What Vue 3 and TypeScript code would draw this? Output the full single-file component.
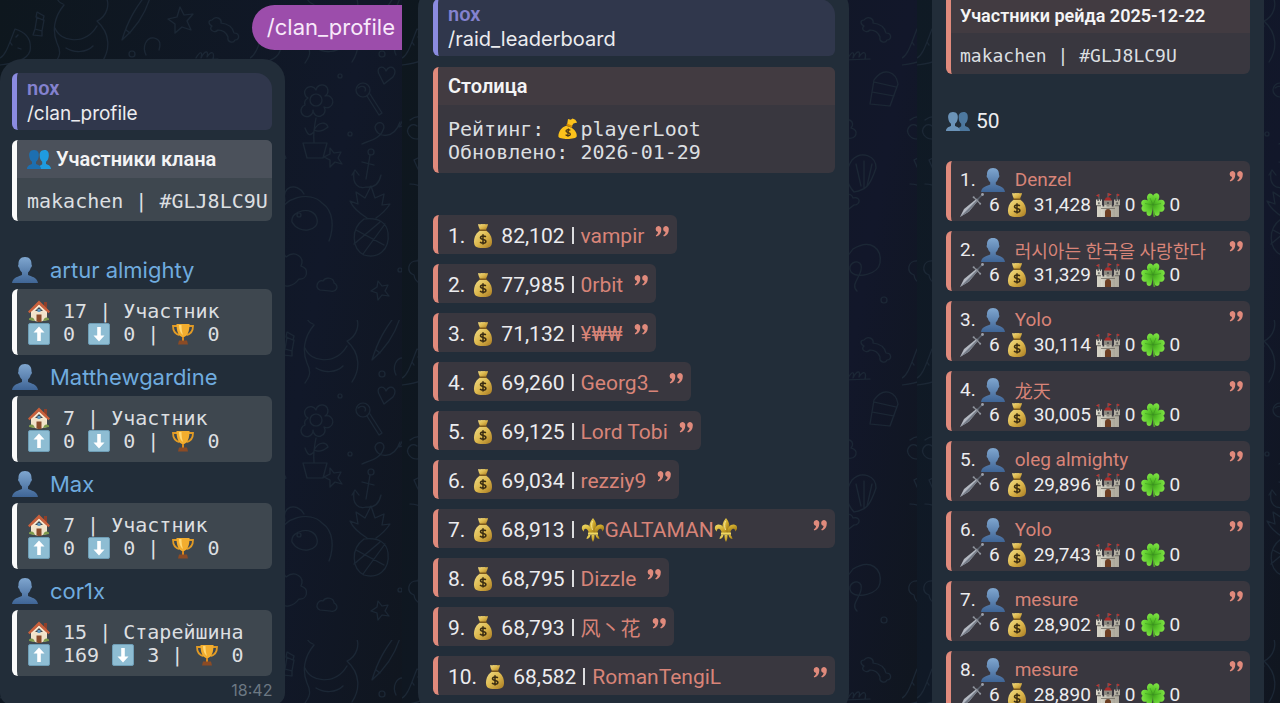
<script setup lang="ts">
interface ClanMember {
  name: string
  house: string
  role: string
  up: string
  down: string
  cups: string
}
interface LootRow {
  loot: string
  name: string
  lily?: boolean
  wide?: boolean
  cjk?: boolean
}
interface RaidRow {
  name: string
  loot: string
  cjk?: boolean
}

const members: ClanMember[] = [
  { name: 'artur almighty', house: '17', role: 'Участник', up: '0', down: '0', cups: '0' },
  { name: 'Matthewgardine', house: '7', role: 'Участник', up: '0', down: '0', cups: '0' },
  { name: 'Max', house: '7', role: 'Участник', up: '0', down: '0', cups: '0' },
  { name: 'cor1x', house: '15', role: 'Старейшина', up: '169', down: '3', cups: '0' },
]

const leaders: LootRow[] = [
  { loot: '82,102', name: 'vampir' },
  { loot: '77,985', name: '0rbit' },
  { loot: '71,132', name: '¥₩₩' },
  { loot: '69,260', name: 'Georg3_' },
  { loot: '69,125', name: 'Lord Tobi' },
  { loot: '69,034', name: 'rezziy9' },
  { loot: '68,913', name: 'GALTAMAN', lily: true, wide: true },
  { loot: '68,795', name: 'Dizzle' },
  { loot: '68,793', name: '风丶花', cjk: true },
  { loot: '68,582', name: 'RomanTengiL', wide: true },
]

const raiders: RaidRow[] = [
  { name: 'Denzel', loot: '31,428' },
  { name: '러시아는 한국을 사랑한다', loot: '31,329', cjk: true },
  { name: 'Yolo', loot: '30,114' },
  { name: '龙天', loot: '30,005', cjk: true },
  { name: 'oleg almighty', loot: '29,896' },
  { name: 'Yolo', loot: '29,743' },
  { name: 'mesure', loot: '28,902' },
  { name: 'mesure', loot: '28,890' },
]
</script>

<template>
  <svg class="sprite" aria-hidden="true">
    <defs>
      <linearGradient id="g-person" x1="0" y1="0" x2="0" y2="1">
        <stop offset="0" stop-color="#7fa6cf" />
        <stop offset="1" stop-color="#3f6596" />
      </linearGradient>
      <linearGradient id="g-bag" x1="0" y1="0" x2="1" y2="1">
        <stop offset="0" stop-color="#f0dc86" />
        <stop offset="0.5" stop-color="#dcb74c" />
        <stop offset="1" stop-color="#a87a22" />
      </linearGradient>
      <linearGradient id="g-gold" x1="0" y1="0" x2="1" y2="1">
        <stop offset="0" stop-color="#f3df6c" />
        <stop offset="0.5" stop-color="#cfa92a" />
        <stop offset="1" stop-color="#7d5c10" />
      </linearGradient>
      <linearGradient id="g-stone" x1="0" y1="0" x2="1" y2="0">
        <stop offset="0" stop-color="#d9d6c9" />
        <stop offset="1" stop-color="#aaa699" />
      </linearGradient>
      <radialGradient id="g-leaf" gradientUnits="userSpaceOnUse" cx="12" cy="12" r="12">
        <stop offset="0" stop-color="#3f9e1b" />
        <stop offset="0.5" stop-color="#5cc92c" />
        <stop offset="1" stop-color="#7ee343" />
      </radialGradient>
      <pattern id="doodles" width="250" height="320" patternUnits="userSpaceOnUse">
        <g fill="none" stroke="currentColor" stroke-width="1.2" stroke-linejoin="round" stroke-linecap="round">
          <path d="M180 7l4 8 9-1-6 7 4 9-9-3-7 6v-9l-7-5 9-2z" />
          <path d="M212 20c4-5 10-1 9 3 8 1 12 5 13 10 6 0 6 7 1 7-2 4-8 2-7-3-2-5-6-7-10-7-4 4-10-1-6-4-4-2-4-6 0-6z" />
          <path d="M37 12l7 4-1 4-7-3zM37 17l-2 12 7 2 2-11M35 29l-2 6 9 1v-6" />
          <path d="M0 58c6-3 9-14 15-29 10 3 17 10 15 22-3 9-15 12-30 14M10 42l2 3M18 48l3 1M16 37l2-2" />
          <path d="M63 4c-8-2-8-14 1-14M104-6c8 10 2 23-7 27 14 13 13 29 5 41M64 5c-10 12-12 26-7 38 5 10 2 14-2 20M66 48c8 5 20 5 27-2M55 28c5 14 30 18 42-2" />
          <path d="M148-8c-12 15-20 28-26 48 14-12 24-26 29-46zM126 30l4 3" />
          <path d="M146 55c-4-8 0-18 8-17 8 2 6 8 5 12M196 58c4-7 7-7 5 0 4-8 8-8 6-1 4-6 8-6 6 2M192 60l26-1" />
          <circle cx="132" cy="54" r="3" />
          <path d="M58 98a6 6 0 1 1 8-8 6 6 0 1 1 9 6 6 6 0 1 1-1 11 6 6 0 1 1-11 3 6 6 0 1 1-8-5 6 6 0 0 1 3-7z" />
          <circle cx="66" cy="100" r="6" />
          <path d="M66 118c-2 10-3 16-2 24M64 130c5-9 12-8 14-3-6 5-10 5-14 3M55 128c3 8 5 8 9 4M53 143h24l-4 15h-16z" />
          <path d="M130 76c-6-9 4-12 6-5 4-8 13-2 7 6l-9 7z" />
          <circle cx="113" cy="90" r="7" /><path d="M108 88c5-4 9 0 7 3M117 96l12 19 3-2-12-19" />
          <path d="M160 105c3 12-1 20-11 22l4-7zM150 122c-6 18-24 16-25 5 2-8 12-4 8 3-3 9-15 11-21 14" />
          <path d="M80 148l4 5 7-1-3 6 4 6-7-2-5 5v-7l-6-3 6-3z" />
          <path d="M120 155l-4 24M112 162l12 3M104 172c-2 13 5 17 12 15 8 1 13-3 15-12M102 175l3-5 4 5" /><circle cx="121" cy="152" r="3" />
          <path d="M117 218c-8-5-14-10-17-17l8 3-2-12 9 6 6-12 4 12 9-4-2 11 8-1c-4 6-8 10-14 14M114 219c-14 10-12 30 0 36 14 4 26-5 24-22-1-9-8-16-24-14zM106 230l28 15M104 244l26-22M113 254l22-30" />
          <path d="M30 214c2-16 30-24 42-11 12 8 12 25 7 38M35 201c-4-14 11-20 19-7M42 222c-2-12 22-17 25-3 3 12-18 16-25 3" /><circle cx="49" cy="215" r="2" />
          <path d="M176 215l18-13c-4-7 5-11 7-4 8-2 8 7 1 7l-17 13c3 8-6 10-7 4-8 2-8-7-2-7z" />
          <path d="M184 130c-7-8 2-13 6-7 6-7 14-1 9 5 9 2 5 12-3 10-3 8-13 6-12-1z" />
          <path d="M200 160c10-10 24-4 24 8-6 18-10 22-22 24-9-10-10-20-2-32zM204 164l5 22M212 161v27M220 164l-5 22" />
          <path d="M12 275c-8-2-7-15 4-14 2-13 17-12 20-4 9-7 19 0 15 9 9 3 6 14-2 13-6 8-14 9-20 4-8 3-16 0-17-8z" />
          <path d="M165 296l36-47c18-11 29 0 27 14-2 11-22 16-29 9-5-8 7-14 10-7 3 10-12 19-4 26M163 294l6 5 4-6" />
          <path d="M70 290c-6-2-2-11 3-9 3-5 11-3 11 2 6 3 2 10-4 8zM128 281l4 5 6-1-3 6 4 5-7-1-4 5-1-7-6-2 6-4z" />
          <path d="M8 120c10-8 22 0 19 11-3 8-15 11-20 4-4-6 2-13 8-9M12 160l20-10 4 8-20 11zM8 184c10 0 17 5 18 14" />
          <path d="M222 80c10-14 22-8 24 4l-8 22-20-2zM222 82l22 5M220 92l22 4" />
          <circle cx="90" cy="76" r="2" /><circle cx="100" cy="134" r="2" /><circle cx="168" cy="170" r="2" /><circle cx="150" cy="270" r="2" /><circle cx="232" cy="300" r="3" />
        </g>
      </pattern>
    </defs>
    <symbol id="i-person" viewBox="0 0 24 24">
      <path d="M12 0C7.600 0 5.800 3 6 7c-.8.5-.3 2.700.7 3 .4 2 1.300 3.300 2.500 4.300v2.200C6.500 18 .8 18.200 0 24h24c-.8-5.800-6.500-6-9.200-7.500v-2.200c1.200-1 2.100-2.300 2.500-4.300 1-.3 1.500-2.500.7-3 .2-4-1.600-7-6-7z" fill="url(#g-person)" />
    </symbol>
    <symbol id="i-people" viewBox="0 0 24 22">
      <path d="M17.500 2c-3.800 0-5 2.800-4.800 5.700 0 3 1.200 5 2.500 6v2.500L11 19v2h13c0-3.500-3-4-5-5v-2.300c1.600-1.200 2.600-3 2.800-5.700C22 4.500 21 2 17.500 2z" fill="#4d789f" />
      <path d="M7 2C3 2 1.800 5 2.200 8c.2 2.600 1.300 4.600 2.800 5.700V16c-2 1-5 1.500-5 5h14c0-3.500-3-4-5-5v-2.300c1.500-1.100 2.600-3.100 2.800-5.700C12.200 5 11 2 7 2z" fill="#6b93b8" />
    </symbol>
    <symbol id="i-people-bright" viewBox="0 0 24 22">
      <path d="M17.500 2c-3.800 0-5 2.800-4.800 5.700 0 3 1.200 5 2.500 6v2.500L11 19v2h13c0-3.500-3-4-5-5v-2.300c1.600-1.200 2.600-3 2.800-5.700C22 4.500 21 2 17.500 2z" fill="#1f9be0" />
      <path d="M7 2C3 2 1.800 5 2.200 8c.2 2.600 1.300 4.600 2.800 5.700V16c-2 1-5 1.500-5 5h14c0-3.500-3-4-5-5v-2.300c1.500-1.100 2.600-3.100 2.800-5.700C12.200 5 11 2 7 2z" fill="#1d6fb0" />
    </symbol>
    <symbol id="i-house" viewBox="0 0 22 22">
      <path d="M16 2h3v7h-3z" fill="#8c3f2a" />
      <path d="M3 11h16v9l-8 2-8-2z" fill="#f1e3ca" />
      <path d="M11 4l-8 7.500V15l8-8 8 8v-3.500z" fill="#f6e6cf" />
      <path d="M11 .5L0 11.500 1.500 13.200 11 4.500l9.500 8.700L22 11.500z" fill="#c9603c" />
      <path d="M8.500 14.500h5V22l-2.500.3-2.500-1z" fill="#8a4b2c" />
      <path d="M9.500 9h3v3h-3z" fill="#5f9cc4" />
      <path d="M1 18.500c2-1.500 4-1 5 .5l1 2-6-1zM21 18.500c-2-1.500-4-1-5 .5l-1 2 6-1z" fill="#7d9a4c" />
    </symbol>
    <symbol id="i-up" viewBox="0 0 22 22">
      <rect x="0.500" y="0.500" width="21" height="21" rx="1.500" fill="#8ebdd3" stroke="#6e9db5" />
      <path d="M11 3.500l5.500 6h-3.700V18H9.200V9.500H5.500z" fill="#fff" />
    </symbol>
    <symbol id="i-down" viewBox="0 0 22 22">
      <rect x="0.500" y="0.500" width="21" height="21" rx="1.500" fill="#8ebdd3" stroke="#6e9db5" />
      <path d="M11 18.500l5.500-6h-3.700V4H9.200v8.500H5.500z" fill="#fff" />
    </symbol>
    <symbol id="i-cup" viewBox="0 0 22 22">
      <path d="M5 3H1c0 5 2 8 6.500 9M17 3h4c0 5-2 8-6.500 9" fill="none" stroke="#e09a25" stroke-width="1.800" />
      <path d="M4.500 1h13c0 7-1.500 12-6.500 13.500C6 13 4.500 8 4.500 1z" fill="#f2ad2e" />
      <path d="M7 2h2.500c0 4 .5 7 1.500 10C8 10 7 6 7 2z" fill="#ffd873" />
      <path d="M10 14h2v4h-2z" fill="#d98a1f" />
      <path d="M7 17.500h8l1 4H6z" fill="#8b4b25" />
    </symbol>
    <symbol id="i-bag" viewBox="0 0 24 24">
      <path d="M7 0c2 1 3-.6 5 .3 2-.9 3 .7 5-.3-.3 2.500-1.400 4-2 6H9C8.400 4.500 7.300 2.500 7 0z" fill="url(#g-bag)" />
      <path d="M8.500 5.500h7l.5 2H8z" fill="#7d5a1c" />
      <path d="M8.500 7h7c3 1.500 5.500 6 5.500 10.500 0 5-2 6.500-9 6.500s-9-1.500-9-6.500C3 13 5.500 8.500 8.500 7z" fill="url(#g-bag)" />
      <path d="M14.800 13c-.8-1.300-5.300-1.500-5.300.8 0 2.500 5.400 1 5.400 3.700 0 2.300-4.900 2.200-5.800.4M12 10.300v10.200" fill="none" stroke="#3a2c12" stroke-width="1.500" />
    </symbol>
    <symbol id="i-bag-flat" viewBox="0 0 22 24">
      <path d="M11 1l3 1 2-1.500 3 1.500 2 3-4 1-2 3-5-2z" fill="#fcc21b" />
      <path d="M10 6l6 2.500-1 2-6-2.500z" fill="#d68c00" />
      <path d="M9 8.500l6 2c4 2.500 6 6.500 5.500 9.500-.5 4-20 4-20 0C.5 15 4 10 9 8.500z" fill="#fcc21b" />
      <path d="M13.500 13.500c-1-1.300-4.700-1.200-4.700.8 0 2.400 4.800 1 4.800 3.500 0 2.200-4.200 2-5.200.4M11.500 11.500l-.8 9" fill="none" stroke="#4a3617" stroke-width="1.400" />
    </symbol>
    <symbol id="i-lily" viewBox="0 0 24 24">
      <path d="M12 0c3 4 4.500 7 2.500 12L13.500 15h-3L9.500 12C7.500 7 9 4 12 0z" fill="url(#g-gold)" />
      <path d="M10.500 15c.3-6-3-9-6.500-8.500C0 7 0 12 3 13.500c-.3-2.200 1-3.300 2.500-2.500 1.500.8 2 2.500 2.200 4zM13.500 15c-.3-6 3-9 6.500-8.500 4 .5 4 5.500 1 7 .3-2.200-1-3.300-2.500-2.500-1.500.8-2 2.500-2.200 4z" fill="url(#g-gold)" />
      <path d="M7 14.500h10v2.300H7z" fill="#f0d860" />
      <path d="M10.500 17h3c0 3-.3 5-1.500 7-1.200-2-1.500-4-1.500-7zM9.500 17c-.5 2.500-2 4-4 4 .2-1.500.7-2.500 2-4zM14.500 17c.5 2.500 2 4 4 4-.2-1.500-.7-2.500-2-4z" fill="url(#g-gold)" />
      <path d="M11.500 3c-1.200 3-1 6 0 9" stroke="#fff2a8" stroke-width="0.800" fill="none" />
    </symbol>
    <symbol id="i-sword" viewBox="0 0 24 24">
      <path d="M0 24l4-8L17 5.500l1.500 1.500L9 18.500z" fill="#b4b9c2" />
      <path d="M0 24L17.700 6.300l.8.7L9 18.500z" fill="#747b87" />
      <path d="M14 4.500l6 6" stroke="#8b8f98" stroke-width="1.200" stroke-linecap="round" />
      <path d="M17.500 6.500l4.500-4.500" stroke="#59606c" stroke-width="1.500" />
      <circle cx="22.500" cy="1.500" r="1.400" fill="#9da2ab" /><circle cx="13.600" cy="4.200" r="1" fill="#8e939d" /><circle cx="20.200" cy="10.700" r="1" fill="#8e939d" />
    </symbol>
    <symbol id="i-castle" viewBox="0 0 24 24">
      <path d="M3 1v6M12 0v5M21 1v6" stroke="#777" stroke-width="0.800" />
      <path d="M2.800 1L0 2.500 2.800 4zM12.300 0l3.500 1.600-3.500 1.700zM21.200.500L24 2l-2.800 1.500z" fill="#c4332f" />
      <path d="M10 4.500h4l2 3.500H8z" fill="#a82c2b" />
      <path d="M0 6.500h1.500V8h1.200V6.500h1.500V8h.8V6.500H6v5.800H5V24H1V12.300H0zM18 6.500h1.500V8h1.200V6.500h1.500V8h.6V6.500H24v5.800h-1V24h-4V12.300h-1z" fill="url(#g-stone)" />
      <path d="M8 7.500h8V14H8z" fill="#8e8a80" />
      <path d="M5 12h1.500v1.500h2V12h2v1.500h3V12h2v1.500h2V12H19v12H5z" fill="url(#g-stone)" />
      <path d="M9 24v-5c0-4 6-4 6 0v5z" fill="#6b3d22" />
      <path d="M1 12.300h4v1H1zM19 12.300h4v1h-4zM5 15h14v.8H5z" fill="#6f6b62" />
      <path d="M2.300 9.300h1.200v2H2.300zM20.500 9.300h1.200v2h-1.200zM11.300 9h1.400v2h-1.400z" fill="#444" />
    </symbol>
    <symbol id="i-clover" viewBox="0 0 24 24">
      <path d="M12 12c.5 4 .2 8 1.500 12" stroke="#4fa32a" stroke-width="1.600" fill="none" />
      <g fill="url(#g-leaf)">
        <path d="M12 12C7.500 10 4.800 5.500 6.500 2.500c1.500-2.800 4.500-2.300 5.600.3C13-.3 16.700-.8 18 2c1.200 3.300-1.500 7.800-6 10z" />
        <path d="M12 12.500C10 8 5.500 5.800 2.300 7-.5 8.300-.3 11.500 1.800 12.700-.5 14.200.3 18 3 18.700c3.500.8 7.500-2 9-6.200z" />
        <path d="M12 12.500c2-4.500 6.500-6.700 9.700-5.500 2.800 1.300 2.600 4.500.5 5.700 2.300 1.500 1.500 5.300-1.200 6-3.500.8-7.500-2-9-6.200z" />
        <path d="M12 12c-4 1.500-7.300 5.500-6.300 9 .8 2.700 4 2.500 4.800.3.700-3 1.200-6 1.500-9.300zM12 12c4 1.500 7.500 5.500 6.500 9-.8 2.700-4 2.500-4.800.3-.9-3-1.500-6-1.700-9.300z" />
      </g>
      <path d="M12 12L9 5M12 12l3-7M12 12l-8-1.500M12 12l8-1.500" stroke="#3b9420" stroke-width="0.600" />
    </symbol>
    <symbol id="i-quote" viewBox="0 0 14 11">
      <path d="M3.200 0a3.100 3.100 0 0 1 3.100 3.400C6.300 7 4.500 9.500 1.500 10.500l-.8-1.100c1.400-.8 2.200-1.900 2.400-3.300A3.100 3.100 0 0 1 3.200 0zM10.700 0a3.100 3.100 0 0 1 3.100 3.400c0 3.600-1.800 6.100-4.800 7.100l-.8-1.100c1.400-.8 2.200-1.900 2.400-3.300A3.100 3.100 0 0 1 10.700 0z" fill="#e08a7c" />
    </symbol>
  </svg>

  <main class="board">
    <section class="panel profile">
      <svg class="wallpaper" aria-hidden="true"><rect width="100%" height="100%" fill="url(#doodles)" /></svg>
      <div class="outgoing">/clan_profile</div>
      <article class="bubble">
        <div class="reply"><b>nox</b><span>/clan_profile</span></div>
        <div class="card pale">
          <h2><svg class="icon"><use href="#i-people-bright" /></svg>Участники клана</h2>
          <p class="mono">makachen | #GLJ8LC9U</p>
        </div>
        <ul class="members">
          <li v-for="m in members" :key="m.name">
            <a href="#" class="member"><svg class="icon"><use href="#i-person" /></svg>{{ m.name }}</a>
            <div class="card pale stats mono">
              <div><svg class="cell"><use href="#i-house" /></svg> {{ m.house }} | {{ m.role }}</div>
              <div><svg class="cell"><use href="#i-up" /></svg> {{ m.up }} <svg class="cell"><use href="#i-down" /></svg> {{ m.down }} | <svg class="cell"><use href="#i-cup" /></svg> {{ m.cups }}</div>
            </div>
          </li>
        </ul>
        <time>18:42</time>
      </article>
    </section>

    <section class="panel loot">
      <svg class="wallpaper" aria-hidden="true"><rect width="100%" height="100%" fill="url(#doodles)" /></svg>
      <article class="bubble">
        <div class="reply"><b>nox</b><span>/raid_leaderboard</span></div>
        <div class="card rose">
          <h2>Столица</h2>
          <p class="mono">Рейтинг: <svg class="cell"><use href="#i-bag-flat" /></svg>playerLoot<br>Обновлено: 2026-01-29</p>
        </div>
        <ol class="leaders">
          <li v-for="(row, i) in leaders" :key="row.loot" class="card rose" :class="{ wide: row.wide }">
            <span class="line">
              <span>{{ i + 1 }}.</span>
              <svg class="icon"><use href="#i-bag" /></svg>
              <span>{{ row.loot }}</span>
              <i class="bar"></i>
              <a href="#" :class="{ cjk: row.cjk }"><svg v-if="row.lily" class="icon"><use href="#i-lily" /></svg>{{ row.name }}<svg v-if="row.lily" class="icon"><use href="#i-lily" /></svg></a>
            </span>
            <svg class="mark"><use href="#i-quote" /></svg>
          </li>
        </ol>
      </article>
    </section>

    <section class="panel raid">
      <svg class="wallpaper" aria-hidden="true"><rect width="100%" height="100%" fill="url(#doodles)" /></svg>
      <article class="bubble">
        <div class="card rose">
          <h2>Участники рейда 2025-12-22</h2>
          <p class="mono">makachen | #GLJ8LC9U</p>
        </div>
        <div class="total"><svg class="icon"><use href="#i-people" /></svg>50</div>
        <ol class="raiders">
          <li v-for="(row, i) in raiders" :key="i" class="card rose">
            <div class="info">
              <div class="line who">
                <span>{{ i + 1 }}.</span>
                <svg class="icon"><use href="#i-person" /></svg>
                <a href="#" :class="{ cjk: row.cjk }">{{ row.name }}</a>
              </div>
              <div class="line">
                <svg class="icon"><use href="#i-sword" /></svg><span>6</span>
                <svg class="icon"><use href="#i-bag" /></svg><span>{{ row.loot }}</span>
                <svg class="icon"><use href="#i-castle" /></svg><span>0</span>
                <svg class="icon"><use href="#i-clover" /></svg><span>0</span>
              </div>
            </div>
            <svg class="mark"><use href="#i-quote" /></svg>
          </li>
        </ol>
      </article>
    </section>
  </main>
</template>

<style>
body {
  margin: 0;
  background: #0f1720;
}
</style>

<style scoped>
.sprite {
  position: absolute;
  width: 0;
  height: 0;
  color: #1b2735;
}
.board {
  display: grid;
  grid-template-columns: 402fr 515fr 363fr;
  height: 100vh;
  overflow: hidden;
  color: #ececef;
  font-family: Inter, "Noto Sans CJK SC", "Noto Sans CJK KR", sans-serif;
  font-size: 20px;
}
.panel {
  position: relative;
  overflow: hidden;
  display: flex;
  flex-direction: column;
  align-items: flex-start;
  background: linear-gradient(100deg, #0e171e, #111829 70%, #10161f);
  color: #ececef;
}
.wallpaper {
  position: absolute;
  inset: 0;
  width: 100%;
  height: 100%;
}
ul,
ol {
  list-style: none;
  margin: 0;
  padding: 0;
}
a {
  color: inherit;
  text-decoration: none;
}
h2,
p {
  margin: 0;
}
.icon {
  flex: none;
  width: 24px;
  height: 24px;
}
.cell {
  width: 24px;
  height: 22px;
  vertical-align: -4px;
}
.mono {
  font-family: "DejaVu Sans Mono", monospace;
  font-size: 20px;
  line-height: 23px;
  color: #dcdfe1;
}
.bubble {
  position: relative;
  box-sizing: border-box;
  background: #222d39;
}
.outgoing {
  position: relative;
  align-self: flex-end;
  margin-top: 5px;
  padding: 0 7px 0 15px;
  border-radius: 23px 0 0 23px;
  background: #9c4dab;
  color: #f8e9fa;
  font-size: 22px;
  line-height: 45px;
}
.reply {
  box-sizing: border-box;
  height: 57px;
  padding: 3px 0 0 10px;
  border-left: 5px solid #8b8be0;
  border-radius: 6px 16px 6px 6px;
  background: #30374c;
  display: flex;
  flex-direction: column;
  font-size: 19px;
  line-height: 25px;
}
.reply b {
  color: #8482cf;
  font-family: Roboto, sans-serif;
  font-size: 20px;
  font-weight: 600;
}
.card {
  border-left: 5px solid #e08a7c;
  border-radius: 6px;
  background: #39373f;
  overflow: hidden;
}
.card.pale {
  border-color: #fafafa;
  background: #3e474f;
}
.card h2 {
  display: flex;
  align-items: center;
  gap: 5px;
  height: 38px;
  padding-left: 10px;
  background: #423b41;
  color: #f4f4f5;
  font-family: Roboto, sans-serif;
  font-size: 20px;
  font-weight: 600;
}
.card.pale h2 {
  background: #4b515b;
}

.profile .bubble {
  width: 71%;
  margin-top: 9px;
  padding: 14px 13px 6px 12px;
  border-radius: 22px 22px 12px 12px;
}
.profile .card {
  margin-top: 10px;
}
.profile .card p {
  padding: 12px 0 8px 10px;
  white-space: nowrap;
}
.members {
  margin-top: 27px;
}
.member {
  display: flex;
  align-items: center;
  gap: 12px;
  box-sizing: border-box;
  height: 41px;
  padding-top: 3px;
  color: #6fabdf;
  font-size: 22px;
}
.member .icon {
  width: 26px;
  height: 26px;
}
.profile .stats {
  margin: 0;
  padding: 11px 0 9px 10px;
}
time {
  display: block;
  height: 18px;
  margin-top: 5px;
  text-align: right;
  color: #6c7883;
  font-size: 16px;
  line-height: 18px;
}

.loot {
  background: linear-gradient(100deg, #0e171e, #12172a 80%, #10161f);
}
.loot .bubble {
  width: calc(100% - 84px);
  margin: -14px 68px 0 16px;
  padding: 13px 14px 20px 15px;
  border-radius: 22px;
}
.loot .reply {
  font-size: 20px;
}
.loot .bubble > .card {
  margin-top: 11px;
}
.loot .card p {
  padding: 13px 0 9px 10px;
}
.leaders {
  display: flex;
  flex-direction: column;
  align-items: flex-start;
  gap: 10px;
  margin-top: 42px;
  font-family: Roboto, "Noto Sans CJK SC", sans-serif;
  font-size: 21px;
}
.leaders li {
  display: flex;
  justify-content: space-between;
  gap: 11px;
  height: 39px;
  padding: 2px 8px 0 10px;
  box-sizing: border-box;
}
.leaders .wide {
  align-self: stretch;
}
.leaders .cjk {
  font-size: 20px;
}
.line {
  display: flex;
  align-items: center;
  gap: 6px;
}
.line a {
  display: flex;
  align-items: center;
  color: #d88478;
}
.bar {
  width: 2px;
  height: 17px;
  margin: 0 1px;
  background: #dcdcde;
}
.mark {
  flex: none;
  width: 14px;
  height: 11px;
  margin-top: 9px;
}

.raid {
  background: linear-gradient(100deg, #0f1a24, #12172a 80%, #10161f);
}
.raid .bubble {
  width: calc(100% - 31px);
  margin: -20px 16px 0 15px;
  padding: 15px 14px 0;
}
.raid .card h2 {
  padding: 3px 0 0 9px;
  height: 35px;
  font-size: 18px;
}
.raid .card p {
  padding: 11px 0 7px 9px;
  font-size: 18px;
}
.total {
  display: flex;
  align-items: center;
  gap: 6px;
  box-sizing: border-box;
  height: 87px;
  padding-top: 7px;
  font-family: Roboto, sans-serif;
  font-size: 21px;
}
.raiders {
  display: flex;
  flex-direction: column;
  gap: 10px;
  font-family: Roboto, "Noto Sans CJK SC", "Noto Sans CJK KR", sans-serif;
  font-size: 19px;
}
.raiders .cjk {
  font-size: 18px;
}
.raiders li {
  display: flex;
  justify-content: space-between;
  height: 60px;
  padding: 6px 7px 4px 9px;
  box-sizing: border-box;
}
.raiders .line {
  gap: 5px;
  height: 25px;
}
.raiders .who a {
  margin-left: 5px;
}
.raiders .mark {
  margin-top: 4px;
}
</style>
